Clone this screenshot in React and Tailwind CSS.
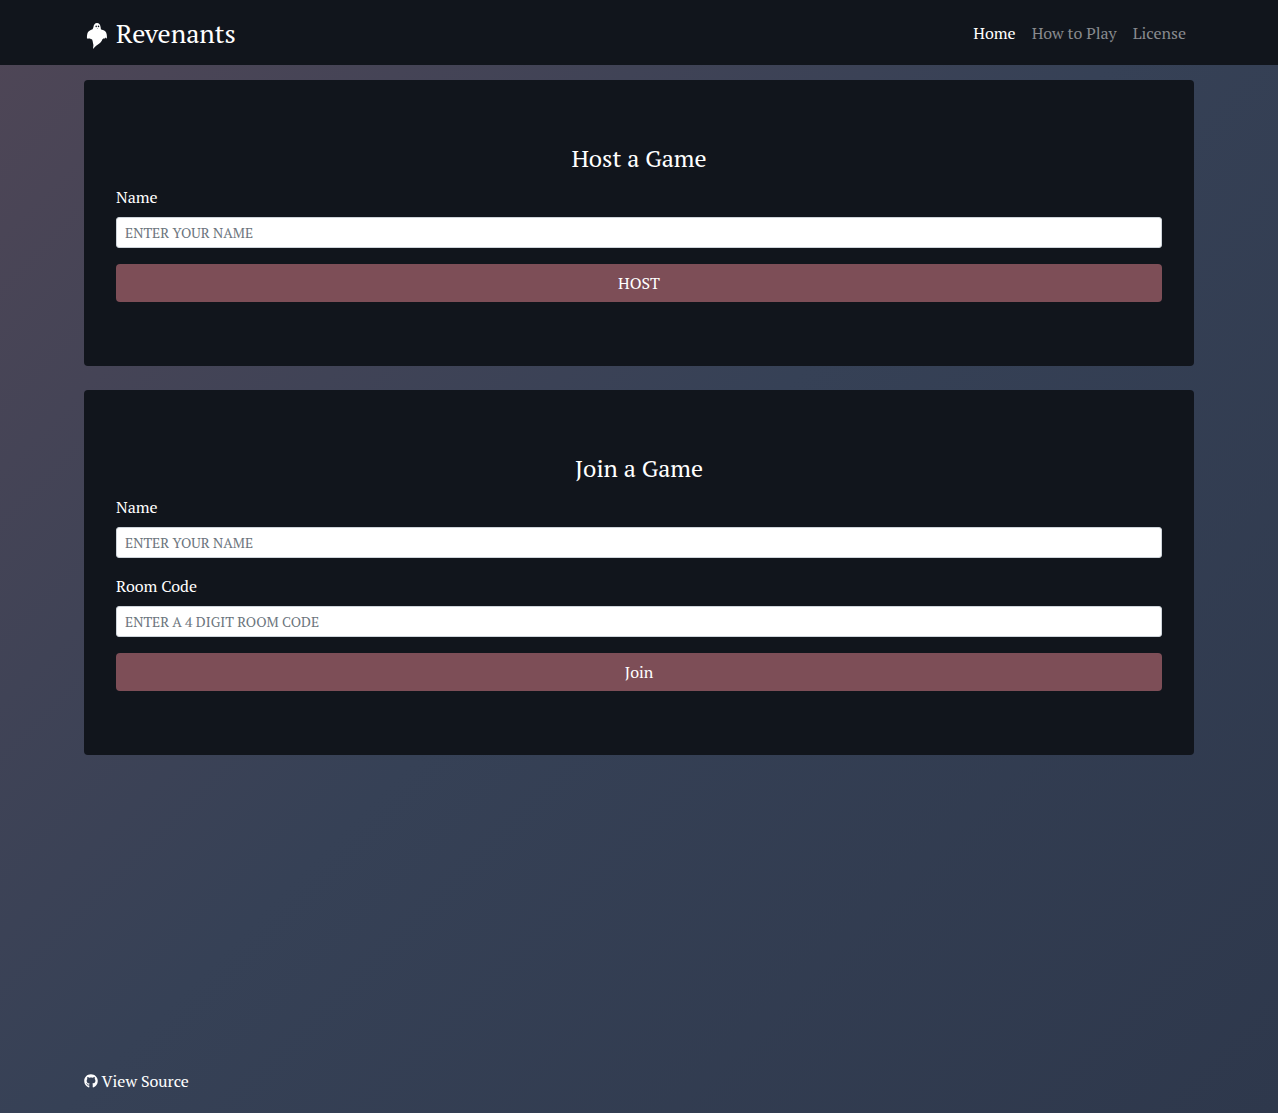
import React from "react";
import { FaGithub } from "react-icons/fa";

function Ghost() {
  return (
    <svg viewBox="0 0 24 30" className="mr-[8px] mt-[7px] h-[30px] w-6" aria-hidden="true">
      <path
        fill="#fff"
        d="M13 2.1C10.9 2.1 9.7 3.8 9.4 6.2L8.6 8.2C6.8 8.9 4.9 9.6 3.9 11.2C3.1 12.8 2.8 15.2 3 18.1L4.1 17L4.8 18.1L5.8 17.2L6.9 18.3L8 18.2L8.6 20C9 21.3 8.9 22.6 9.4 24L9 27.9C10.8 26.3 11.3 25.2 13.6 23.8C16.2 22.2 17.8 20.7 18.5 18.1L19 18.3L19.9 17L20.8 17.8L21.6 16.6L22.9 17.7C23.1 14.5 22.7 11.8 21.2 10.3C19.9 9.1 18 9.1 16.9 8.3L16.6 5.9C16.2 3.5 15 2.1 13 2.1Z"
      />
      <ellipse cx="12.2" cy="5.4" rx=".75" ry=".8" fill="#11151c" />
      <ellipse cx="14.5" cy="5.4" rx=".75" ry=".8" fill="#11151c" />
      <ellipse cx="13.4" cy="7.6" rx=".6" ry=".45" fill="#777a80" />
    </svg>
  );
}

function Field({ label, placeholder }) {
  return (
    <label className="mb-4 block">
      <span className="mb-2 block h-6 leading-6">{label}</span>
      <input
        placeholder={placeholder}
        className="block h-[31px] w-full rounded-[3px] border border-[#ced4da] bg-white px-2 py-0 text-[14px] text-[#495057] outline-none placeholder:text-[#6c757d]"
      />
    </label>
  );
}

function Panel({ title, action, children }) {
  return (
    <section className="rounded bg-[#11151c] px-8 py-16">
      <h2 className="mb-2 h-[29px] text-center text-[24px] leading-[29px]">{title}</h2>
      <div className="pt-1">{children}</div>
      <button className="block h-[38px] w-full rounded bg-[#7d4e57] leading-[38px]">{action}</button>
    </section>
  );
}

export default function App() {
  return (
    <div className="flex h-[1113px] flex-col overflow-hidden bg-[linear-gradient(135deg,#4f4656_0%,#364156_49%,#2e384c_100%)] font-['PT_Serif','Liberation_Serif',serif] text-base text-white">
      <header className="h-[65px] shrink-0 bg-[#11151c]">
        <nav className="mx-auto flex h-full w-[1110px] items-center justify-between">
          <div className="flex items-center text-[26.1px] leading-[36px]">
            <Ghost />
            <span className="pt-px">Revenants</span>
          </div>
          <div className="flex gap-4 pr-2 pt-px leading-6">
            <a>Home</a>
            <a className="text-[#888a8e]">How to Play</a>
            <a className="text-[#888a8e]">License</a>
          </div>
        </nav>
      </header>
      <main className="mx-auto mt-[15px] flex w-[1110px] flex-1 flex-col gap-6">
        <Panel title="Host a Game" action="HOST">
          <Field label="Name" placeholder="ENTER YOUR NAME" />
        </Panel>
        <Panel title="Join a Game" action="Join">
          <Field label="Name" placeholder="ENTER YOUR NAME" />
          <Field label="Room Code" placeholder="ENTER A 4 DIGIT ROOM CODE" />
        </Panel>
      </main>
      <footer className="mx-auto flex h-[44px] w-[1110px] shrink-0 items-start gap-[3.6px] leading-6">
        <FaGithub className="mt-[5px] h-[14px] w-[14px]" />
        <a>View Source</a>
      </footer>
    </div>
  );
}
